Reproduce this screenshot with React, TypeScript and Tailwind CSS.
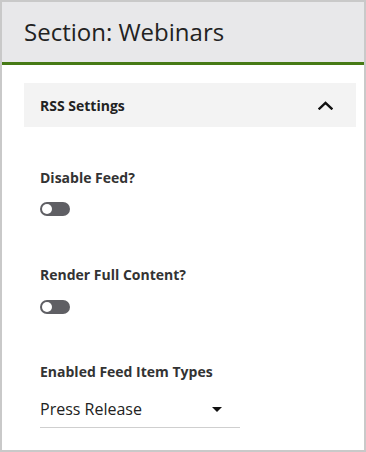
import React from "react";

function Toggle() {
  return (
    <div className="w-[30px] h-[14px] rounded-full bg-[#5f5f64] flex items-center pl-[2px]">
      <div className="w-[10px] h-[10px] rounded-full bg-white" />
    </div>
  );
}

export default function App() {
  return (
    <div
      className="w-[366px] h-[452px] border-2 border-[#c9c9c9] bg-white flex flex-col text-[#222]"
      style={{ fontFamily: '"Open Sans", "Noto Sans", sans-serif' }}
    >
      <div className="h-[63px] bg-[#e8e8ea] border-b-[3px] border-[#467a15] flex items-center pl-[22px] pb-[1px]">
        <span className="text-[24px] leading-[32px] text-[#222]">Section: Webinars</span>
      </div>
      <div className="pl-[22px] pr-[8px] pt-[18px] flex flex-col">
        <div className="h-[44px] bg-[#f3f3f3] flex items-center justify-between pl-[16px] pr-[23px]">
          <span className="text-[14px] font-bold text-[#222]">RSS Settings</span>
          <svg width="15" height="9" viewBox="0 0 15 9" fill="none">
            <path d="M1.5 7.5 L7.5 1.8 L13.5 7.5" stroke="#111" strokeWidth="2.4" strokeLinecap="square" />
          </svg>
        </div>
        <div className="pl-[16px] flex flex-col">
          <div className="mt-[41px] text-[14px] leading-[20px] font-bold text-[#333]">Disable Feed?</div>
          <div className="mt-[14px]">
            <Toggle />
          </div>
          <div className="mt-[49px] text-[14px] leading-[20px] font-bold text-[#333]">Render Full Content?</div>
          <div className="mt-[15px]">
            <Toggle />
          </div>
          <div className="mt-[48px] text-[14px] leading-[20px] font-bold text-[#333]">Enabled Feed Item Types</div>
          <div className="mt-[15px] w-[200px] border-b border-[#cfcfcf] flex items-center justify-between pb-[6px] pr-[18px]">
            <span className="text-[16px] leading-[24px] text-[#222]">Press Release</span>
            <svg width="10" height="5" viewBox="0 0 10 5">
              <path d="M0 0 L10 0 L5 5 Z" fill="#111" />
            </svg>
          </div>
        </div>
      </div>
    </div>
  );
}
